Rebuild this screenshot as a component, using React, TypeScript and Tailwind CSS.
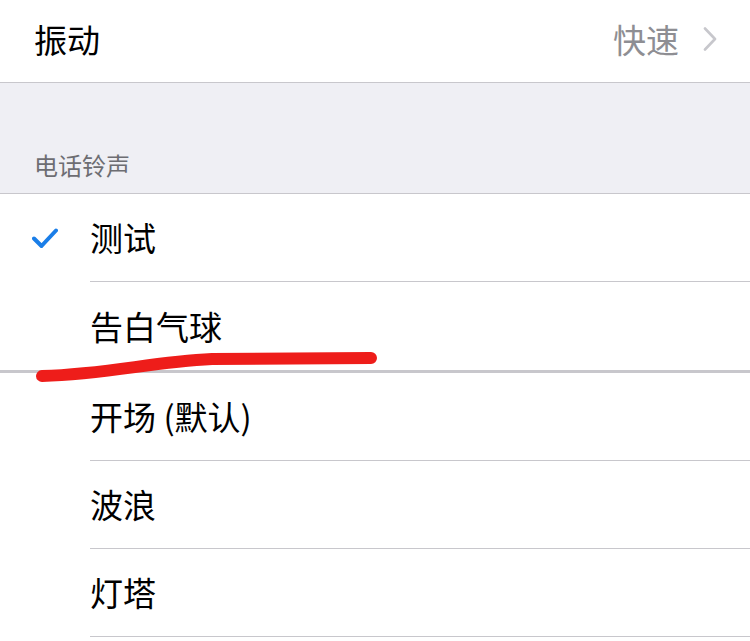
const font = { fontFamily: '"Noto Sans CJK SC", "Noto Sans", sans-serif' };

interface ToneRowProps {
  label: string;
  checked?: boolean;
  heavyLine?: boolean;
}

function ToneRow({ label, checked, heavyLine }: ToneRowProps) {
  return (
    <div className={heavyLine ? 'border-b-[3px] border-[#c8c7cc]' : ''}>
      <div className="flex">
        <div className="w-[90px] flex items-center pl-[32px]">
          {checked && (
            <svg width="26" height="21" viewBox="0 0 26 21" fill="none">
              <path d="M2 10.5 L9.5 18 L24 2.5" stroke="#1a7ee8" strokeWidth="4" strokeLinecap="round" strokeLinejoin="round" />
            </svg>
          )}
        </div>
        <div
          className={`flex-1 h-[88px] flex items-center text-[33px] leading-none text-black ${heavyLine ? '' : 'border-b border-[#c8c7cc]'}`}
        >
          {label}
        </div>
      </div>
    </div>
  );
}

export default function App() {
  return (
    <div className="relative w-[750px] h-[641px] bg-white overflow-hidden" style={font}>
      <div className="h-[83px] flex items-center justify-between pl-[34px] pr-[33px] border-b border-[#c8c7cc] pb-[4px]">
        <span className="text-[33px] leading-none text-black">振动</span>
        <div className="flex items-center gap-[24px]">
          <span className="text-[33px] leading-none text-[#8e8e93]">快速</span>
          <svg width="14" height="24" viewBox="0 0 14 24" fill="none">
            <path d="M2 1.5 L12 12 L2 22.5" stroke="#c7c7cc" strokeWidth="2.6" strokeLinecap="round" strokeLinejoin="round" />
          </svg>
        </div>
      </div>

      <div className="h-[111px] bg-[#efeff4] border-b border-[#c8c7cc] flex items-end pl-[34px] pb-[16px]">
        <span className="text-[24px] leading-none text-[#6d6d72]">电话铃声</span>
      </div>

      <ToneRow label="测试" checked />
      <ToneRow label="告白气球" heavyLine />
      <ToneRow label="开场 (默认)" />
      <ToneRow label="波浪" />
      <ToneRow label="灯塔" />

      <svg className="absolute left-0 top-0 pointer-events-none" width="750" height="641" viewBox="0 0 750 641">
        <path
          d="M42 376 C 110 374, 150 362, 212 359 L 371 358"
          stroke="#ee1d1a"
          strokeWidth="12"
          strokeLinecap="round"
          fill="none"
        />
      </svg>
    </div>
  );
}
